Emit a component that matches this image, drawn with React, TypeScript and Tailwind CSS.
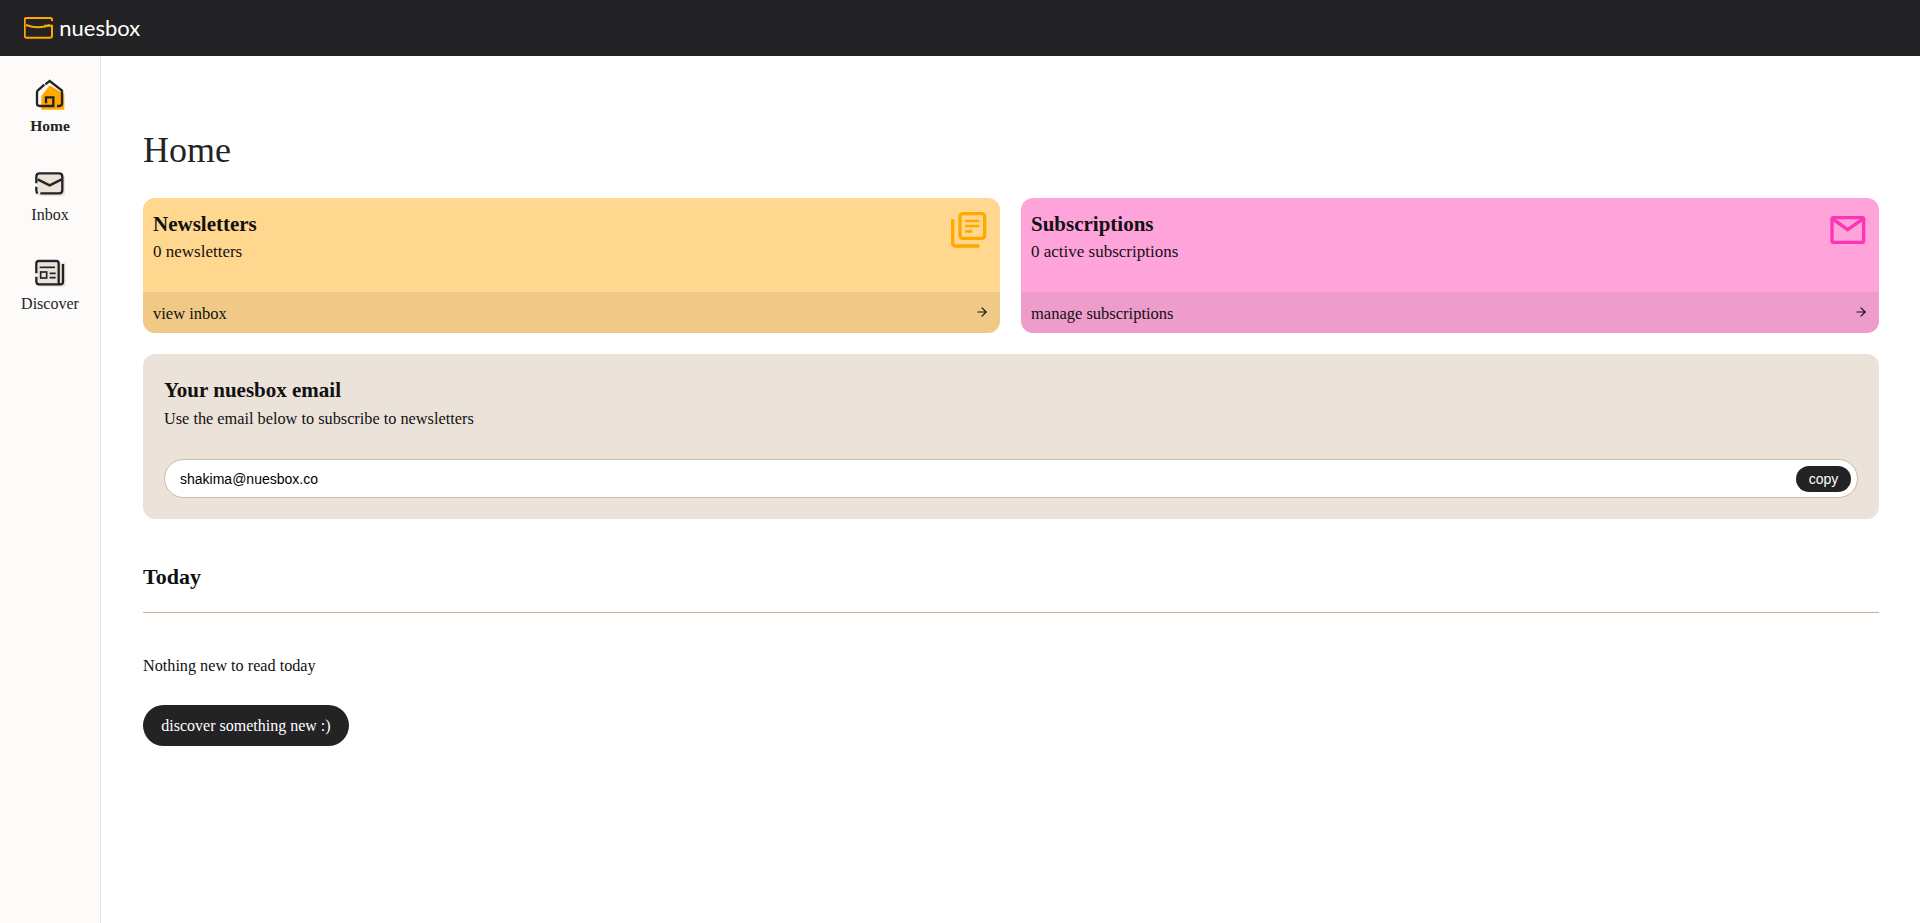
import { ArrowRight } from "lucide-react";

const serif = "font-['Liberation_Serif',serif]";

const HomeIcon = () => (
    <svg viewBox="100 18 100 108" className="w-[33.33px] h-9" fill="none">
        <path d="M150 46 L194 72 V119 H125 V78 Z" fill="#FFA800" />
        <path
            d="M134 44 L114 62 Q112 64 112 68 V100 Q112 108 120 108 H161 V82 H139 V100"
            stroke="#232325"
            strokeWidth="7"
        />
        <path
            d="M137 43 L150 33 L187 62 V100 Q187 108 179 108 H172"
            stroke="#232325"
            strokeWidth="7"
        />
    </svg>
);

const InboxIcon = () => (
    <svg viewBox="100 15 100 108" className="w-[33.33px] h-9" fill="none">
        <rect x="114" y="44" width="82" height="64" rx="10" fill="#EBE2DA" />
        <path
            d="M110 70 V50 Q110 40 120 40 H178 Q188 40 188 50 V90 Q188 100 178 100 H122"
            stroke="#232325"
            strokeWidth="7"
        />
        <path d="M110 80 V90 Q110 98 114 100" stroke="#232325" strokeWidth="7" />
        <path d="M114 58 L150 76 L186 58" stroke="#232325" strokeWidth="7" />
    </svg>
);

const DiscoverIcon = () => (
    <svg viewBox="100 282 100 108" className="w-[33.33px] h-9" fill="none">
        <rect x="114" y="308" width="84" height="72" rx="4" fill="#EBE2DA" />
        <path
            d="M110 340 V310 Q110 303 118 303 H170 Q177 303 177 310 V372"
            stroke="#232325"
            strokeWidth="7"
        />
        <path d="M110 350 V364 Q110 373 118 373 H182 Q190 373 190 365 V312" stroke="#232325" strokeWidth="7" />
        <path d="M120 322 H166" stroke="#232325" strokeWidth="5" />
        <rect x="123" y="336" width="18" height="18" stroke="#232325" strokeWidth="5" />
        <path d="M150 340 H168 M150 353 H168" stroke="#232325" strokeWidth="5" />
    </svg>
);

const LibraryIcon = () => (
    <svg viewBox="150 60 115 115" className="w-[38.33px] h-[38.33px]" fill="none">
        <rect x="180" y="71" width="74" height="74" rx="8" stroke="#FFA800" strokeWidth="10" />
        <path d="M158 88 V160 Q158 168 166 168 H238" stroke="#FFA800" strokeWidth="10" />
        <path d="M195 93 H238 M195 108 H238 M195 124 H217" stroke="#FFA800" strokeWidth="8" />
    </svg>
);

const MailIcon = () => (
    <svg viewBox="146 60 115 115" className="w-[38.33px] h-[38.33px]" fill="none">
        <rect x="155" y="83" width="95" height="74" rx="4" stroke="#FF33B5" strokeWidth="10" />
        <path d="M156 86 L202 119 L249 86" stroke="#FF33B5" strokeWidth="10" />
    </svg>
);

const navItems = [
    { label: "Home", icon: <HomeIcon />, active: true },
    { label: "Inbox", icon: <InboxIcon />, active: false },
    { label: "Discover", icon: <DiscoverIcon />, active: false },
];

interface StatCardProps {
    title: string;
    subtitle: string;
    action: string;
    icon: React.ReactNode;
    bodyClass: string;
    footerClass: string;
}

const StatCard: React.FC<StatCardProps> = ({
    title,
    subtitle,
    action,
    icon,
    bodyClass,
    footerClass,
}) => (
    <div className="rounded-xl overflow-hidden text-[#111]">
        <div className={`h-[94px] flex justify-between pl-[10px] pr-3 ${bodyClass}`}>
            <div className="pt-3">
                <div className="text-[21px] leading-7 font-bold">{title}</div>
                <div className="text-[17px] leading-6 mt-[2px]">{subtitle}</div>
            </div>
            <div className="pt-3">{icon}</div>
        </div>
        <div className={`h-[41px] flex items-center justify-between pl-[10px] pr-[11px] ${footerClass}`}>
            <span className="text-[16.5px] pt-[3px]">{action}</span>
            <ArrowRight size={14} strokeWidth={2} className="-mt-[2px]" />
        </div>
    </div>
);

export default function App() {
    return (
        <div className={`min-h-[923px] flex flex-col bg-white ${serif}`}>
            <header className="h-14 bg-[#232325] flex items-center pl-6 shrink-0">
                <svg viewBox="70 46 88 66" className="w-[29.33px] h-[22px]" fill="none">
                    <path
                        d="M154 58 V54 Q154 49 149 49 H78 Q72 49 72 55 V102 Q72 108 78 108 H148 Q154 108 154 102 V72 H130"
                        stroke="#FFA800"
                        strokeWidth="6"
                    />
                    <path d="M76 70 Q112 84 148 70" stroke="#FFA800" strokeWidth="6" />
                </svg>
                <span className="ml-[6px] text-[22px] leading-none font-normal text-white font-['Lato',sans-serif]">
                    nuesbox
                </span>
            </header>
            <div className="flex flex-1">
                <aside className="w-[101px] shrink-0 bg-[#FDFBF9] border-r border-[#EBE2DA] pt-5 flex flex-col gap-[29px]">
                    {navItems.map((item) => (
                        <div key={item.label} className="flex flex-col items-center">
                            {item.icon}
                            <div
                                className={
                                    item.active
                                        ? "mt-1 text-[15.5px] leading-5 font-bold text-[#232325]"
                                        : "mt-1 text-[16px] leading-5 text-[#232325]"
                                }
                            >
                                {item.label}
                            </div>
                        </div>
                    ))}
                </aside>
                <main className="flex-1 pl-[42px] pr-[41px] pt-[74px]">
                    <h1 className="text-4xl leading-10 text-[#232325]">Home</h1>
                    <div className="grid grid-cols-[857px_1fr] gap-[21px] mt-[28px]">
                        <StatCard
                            title="Newsletters"
                            subtitle="0 newsletters"
                            action="view inbox"
                            icon={<LibraryIcon />}
                            bodyClass="bg-[#FFD78E]"
                            footerClass="bg-[#EFC985]"
                        />
                        <StatCard
                            title="Subscriptions"
                            subtitle="0 active subscriptions"
                            action="manage subscriptions"
                            icon={<MailIcon />}
                            bodyClass="bg-[#FFA3DB]"
                            footerClass="bg-[#ED9CCC]"
                        />
                    </div>
                    <section className="mt-[21px] rounded-xl bg-[#EBE2DA] pt-[22px] pb-[21px] px-[21px] text-[#111]">
                        <h2 className="text-[21px] leading-7 font-bold">Your nuesbox email</h2>
                        <p className="text-[16.3px] leading-6 mt-[3px]">
                            Use the email below to subscribe to newsletters
                        </p>
                        <div className="mt-[28px] h-[39px] rounded-full bg-white border border-[#CFB9A3] flex items-center justify-between pl-[15px] pr-[6px]">
                            <span className="text-sm text-black font-['Liberation_Sans',sans-serif]">
                                shakima@nuesbox.co
                            </span>
                            <button className="w-[55px] h-[26px] rounded-full bg-[#232325] text-white text-sm font-['Liberation_Sans',sans-serif]">
                                copy
                            </button>
                        </div>
                    </section>
                    <h2 className="mt-[44px] text-[22px] leading-7 font-bold text-[#111] pb-[21px] border-b border-[#CFAF8F]">
                        Today
                    </h2>
                    <p className="mt-[41px] text-[16.2px] leading-6 text-[#111]">
                        Nothing new to read today
                    </p>
                    <button className="mt-[27px] block w-[206px] h-[41px] rounded-full bg-[#232325] text-white text-[16px]">
                        discover something new :)
                    </button>
                </main>
            </div>
        </div>
    );
}
